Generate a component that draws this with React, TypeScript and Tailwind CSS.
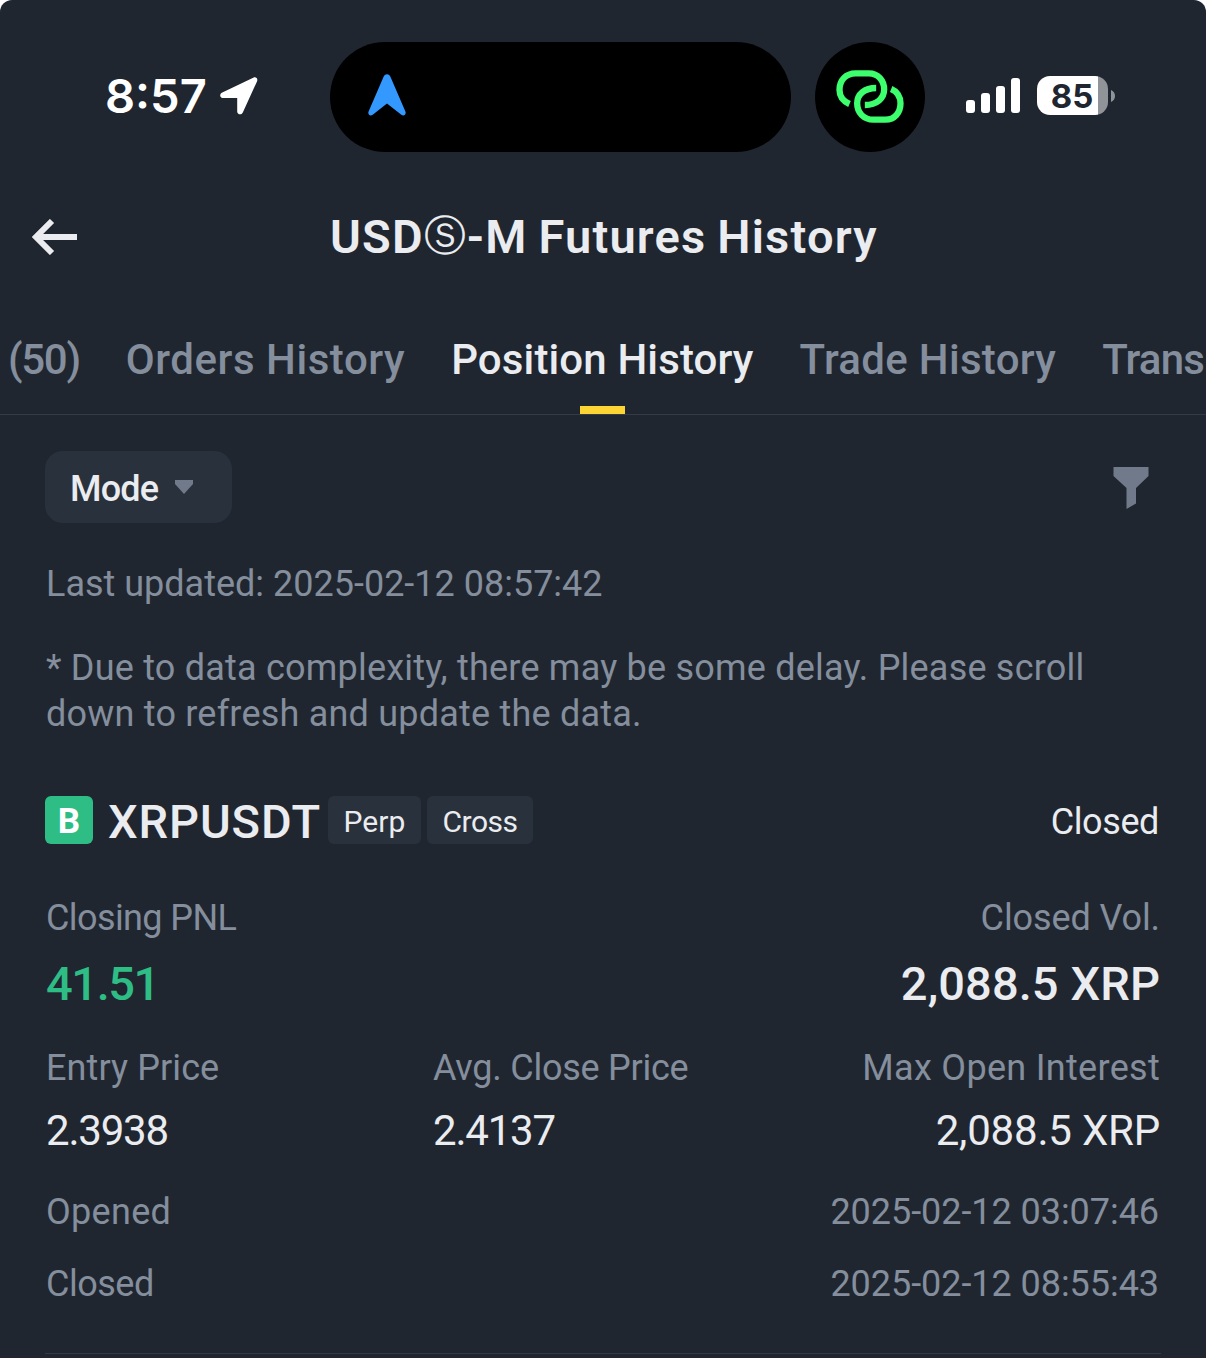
import clsx from "clsx";
import type { ReactNode } from "react";

interface Tab {
  label: string;
  className: string;
}

const TABS: Tab[] = [
  { label: "(50)", className: "tracking-[-1.3px]" },
  { label: "Orders History", className: "tracking-[0.55px]" },
  { label: "Position History", className: "tracking-[0.13px]" },
  { label: "Trade History", className: "tracking-[0.3px]" },
  { label: "Trans", className: "tracking-[-0.8px]" },
];

const ACTIVE_TAB = "Position History";

function LocationIcon() {
  return (
    <svg className="h-[38px] w-[38px]" viewBox="0 0 38 38" fill="#fff">
      <path d="M2.3 15.4 33.2.7c2.8-1.2 5 .9 3.8 3.7L22.8 35.4c-1.4 2.9-5.6 2.2-5.6-1V21H3.4C-.4 21-.9 17 2.3 15.4Z" />
    </svg>
  );
}

function NavigationIcon() {
  return (
    <svg className="h-[42px] w-[38px]" viewBox="0 0 38 42" fill="#3399ff">
      <path d="M15.800 2.2c1.3-2.700 5.100-2.700 6.400 0l15.2 35.2c1.2 2.9-1.5 5.2-4.1 3.4L19 29.6 4.7 40.8C2.1 42.6-.6 40.3.6 37.4Z" />
    </svg>
  );
}

function HotspotIcon() {
  return (
    <svg
      className="h-[53px] w-[68px]"
      viewBox="168 120 203 159"
      fill="none"
      stroke="#3dff6e"
      strokeWidth="19"
    >
      <path d="M208 222C190 214 178 199 178 180c0-30 20-50 48-50h40c28 0 46 22 46 48 0 28-22 47-58 47" />
      <path d="M288 174c-35 0-57 19-57 46 0 29 20 49 49 49h36c27 0 45-20 45-49 0-20-11-36-28-43" />
    </svg>
  );
}

function SignalBars() {
  return (
    <div className="flex items-end gap-1.5">
      <span className="h-[13px] w-[9px] rounded-[3px] bg-white" />
      <span className="h-5 w-[9px] rounded-[3px] bg-white" />
      <span className="h-[27px] w-[9px] rounded-[3px] bg-white" />
      <span className="h-[35px] w-[9px] rounded-[3px] bg-white" />
    </div>
  );
}

function Battery({ level }: { level: number }) {
  return (
    <div className="flex items-center gap-[3px]">
      <div className="flex h-[39px] w-[71px] items-center justify-center overflow-hidden rounded-[13px] bg-linear-to-r from-white from-[86%] to-[#909398] to-[86%] pt-px pr-px">
        <span className="font-[Inter] text-[33px] leading-none font-bold text-[#202630]">
          {level}
        </span>
      </div>
      <svg className="h-3 w-1" viewBox="0 0 4 12" fill="#909398">
        <path d="M0 0c2.4 1 4 3.2 4 6s-1.6 5-4 6Z" />
      </svg>
    </div>
  );
}

function StatusBar() {
  return (
    <div className="flex h-[194px] items-center">
      <div className="flex w-[330px] items-center pb-[2px] pl-[105px]">
        <span className="w-[115px] pb-px font-[Inter] text-[47px] leading-none font-semibold text-white">
          8:57
        </span>
        <LocationIcon />
      </div>
      <div className="flex h-[110px] w-[461px] items-center rounded-full bg-black pb-[4px] pl-[38px]">
        <NavigationIcon />
      </div>
      <div className="ml-6 flex size-[110px] items-center justify-center rounded-full bg-black pr-px pb-[2px]">
        <HotspotIcon />
      </div>
      <div className="ml-[41px] flex items-center gap-[17px] pb-[3px]">
        <SignalBars />
        <Battery level={85} />
      </div>
    </div>
  );
}

function Header() {
  return (
    <header className="grid h-[86px] grid-cols-[330px_1fr] items-center">
      <button type="button" aria-label="Back" className="pl-8">
        <svg
          className="h-[36px] w-[46px]"
          viewBox="0 0 46 36"
          fill="none"
          stroke="#eaecef"
          strokeWidth="6"
        >
          <path d="M45 18H5M20 2 4 18l16 16" />
        </svg>
      </button>
      <h1 className="flex items-center pb-[2px] text-[47px] leading-none font-semibold tracking-[1.2px] whitespace-pre [word-spacing:-2px]">
        USD
        <span className="w-[43px] pb-px font-['DejaVu_Sans',sans-serif] text-[42px] leading-none font-normal tracking-normal">
          Ⓢ
        </span>
        -M Futures History
      </h1>
    </header>
  );
}

function TabBar() {
  return (
    <nav className="flex h-[135px] gap-[46px] overflow-hidden border-b border-[#333b47] pl-2 text-[42px] font-medium whitespace-nowrap">
      {TABS.map((tab) => {
        const active = tab.label === ACTIVE_TAB;

        return (
          <button
            key={tab.label}
            type="button"
            className={clsx(
              "flex shrink-0 flex-col items-center justify-between pt-[55px] leading-[50px]",
              active ? "text-[#eaecef]" : "text-[#848e9c]",
              tab.className,
            )}
          >
            {tab.label}
            {active ? <span className="h-2 w-[45px] bg-[#fcd535]" /> : null}
          </button>
        );
      })}
    </nav>
  );
}

function FilterRow() {
  return (
    <div className="mt-9 flex h-[72px] items-center justify-between pr-[12px]">
      <button
        type="button"
        className="flex h-full w-[187px] items-center rounded-[18px] bg-[#29313d] pt-[3px] pl-[25px] text-[36px] font-medium tracking-[-0.8px]"
      >
        <span className="w-[105px] text-left">Mode</span>
        <svg className="-mt-[4px] h-[14px] w-[18px]" viewBox="0 0 18 14" fill="#707a8a">
          <path d="M0 0h18v4L9 14 0 4Z" />
        </svg>
      </button>
      <svg className="mt-px h-[42px] w-[36px]" viewBox="0 0 36 42" fill="#707a8a">
        <path d="M.5 0h35v9L23 21v15.5L13.5 42V21L.5 9Z" />
      </svg>
    </div>
  );
}

function Chip({ children, className }: { children: ReactNode; className: string }) {
  return (
    <span
      className={clsx(
        "flex h-12 items-center justify-center rounded-md bg-[#29313d] pt-[3px] text-[30px] leading-none",
        className,
      )}
    >
      {children}
    </span>
  );
}

function Label({ children, className }: { children: ReactNode; className: string }) {
  return <p className={clsx("text-[36px] text-[#848e9c]", className)}>{children}</p>;
}

function PositionCard() {
  return (
    <article className="border-b border-[#333b47] pb-[46px]">
      <div className="flex h-12 items-center pr-0.5">
        <span className="flex size-12 items-center justify-center rounded-md bg-[#2ebd85] pt-[3px] text-[35px] leading-none font-bold text-white">
          B
        </span>
        <h2 className="ml-[15px] w-[220px] pt-[3px] text-[47px] leading-none font-medium tracking-[0.9px]">
          XRPUSDT
        </h2>
        <Chip className="w-[93px] tracking-[0.1px]">Perp</Chip>
        <Chip className="ml-1.5 w-[106px] tracking-[-0.5px]">Cross</Chip>
        <span className="ml-auto pt-[3px] text-[36px] leading-none tracking-[-0.4px]">Closed</span>
      </div>

      <div className="mt-[51px] flex justify-between px-px leading-[46px]">
        <div>
          <Label className="tracking-[-0.6px]">Closing PNL</Label>
          <p className="mt-[18px] text-[47px] leading-[50px] font-medium tracking-[-1.4px] text-[#2ebd85]">
            41.51
          </p>
        </div>
        <div className="text-right">
          <Label className="tracking-[-0.1px]">Closed Vol.</Label>
          <p className="mt-[18px] text-[47px] leading-[50px] font-medium tracking-[0.1px]">
            2,088.5 XRP
          </p>
        </div>
      </div>

      <div className="mt-9 grid grid-cols-[387px_1fr_1fr] px-px leading-[46px]">
        <div>
          <Label className="tracking-[0.1px]">Entry Price</Label>
          <p className="mt-[17px] text-[42px] tracking-[-1.2px]">2.3938</p>
        </div>
        <div>
          <Label className="tracking-[-0.25px]">Avg. Close Price</Label>
          <p className="mt-[17px] text-[42px] tracking-[-1.2px]">2.4137</p>
        </div>
        <div className="text-right">
          <Label className="tracking-[0.3px]">Max Open Interest</Label>
          <p className="mt-[17px] text-[42px] tracking-[-0.2px]">2,088.5 XRP</p>
        </div>
      </div>

      <dl className="mt-[35px] grid grid-cols-2 gap-y-[26px] pr-0.5 pl-px text-[36px] leading-[46px] text-[#848e9c]">
        <dt className="tracking-[0.3px]">Opened</dt>
        <dd className="text-right tracking-[-0.05px]">2025-02-12 03:07:46</dd>
        <dt className="tracking-[-0.5px]">Closed</dt>
        <dd className="text-right tracking-[-0.05px]">2025-02-12 08:55:43</dd>
      </dl>
    </article>
  );
}

export default function App() {
  return (
    <div className="bg-white">
      <div className="h-[1358px] w-[1206px] overflow-hidden rounded-t-[12px] bg-[#202630] font-[Roboto,sans-serif] text-[#eaecef]">
        <StatusBar />
        <Header />
        <TabBar />
        <main className="px-[45px]">
          <FilterRow />
          <p className="mt-[38px] pl-px text-[36px] leading-[46px] text-[#848e9c]">
            Last updated: 2025-02-12 08:57:42
          </p>
          <p className="mt-[38px] mb-[59px] pl-px text-[36px] leading-[46px] tracking-[0.21px] whitespace-nowrap text-[#848e9c]">
            * Due to data complexity, there may be some delay. Please scroll
            <br />
            down to refresh and update the data.
          </p>
          <PositionCard />
        </main>
      </div>
    </div>
  );
}
